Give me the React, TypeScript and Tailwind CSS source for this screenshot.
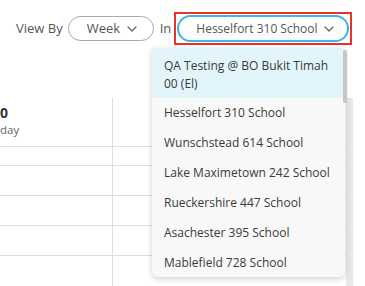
const schools = [
  "Hesselfort 310 School",
  "Wunschstead 614 School",
  "Lake Maximetown 242 School",
  "Rueckershire 447 School",
  "Asachester 395 School",
  "Mablefield 728 School",
];

const Chevron = () => (
  <svg width="10" height="6" viewBox="0 0 10 6" fill="none" stroke="#666" strokeWidth="1.3" strokeLinecap="round" strokeLinejoin="round">
    <path d="M1 1l4 4 4-4" />
  </svg>
);

export default function App() {
  return (
    <div className="relative w-[365px] h-[286px] overflow-hidden bg-white text-[#555] font-['Open_Sans',sans-serif]">
      {/* toolbar */}
      <div className="flex items-center pl-4 pt-3 h-[45px]">
        <span className="text-[13px]">View By</span>
        <button className="ml-[5px] flex items-center justify-between w-[86px] h-[25px] pl-[18px] pr-[16px] rounded-full border border-[#aaa] text-[13px] font-medium">
          Week
          <Chevron />
        </button>
        <span className="ml-[6px] text-[13px]">In</span>
        <div className="ml-[3px] border-2 border-[#e8322b] p-px">
          <button className="flex items-center justify-between w-[172px] h-[27px] pl-[17px] pr-[13px] rounded-full border-2 border-[#3cb6e3] text-[12px] font-medium text-[#555] whitespace-nowrap">
            Hesselfort 310 School
            <Chevron />
          </button>
        </div>
      </div>

      {/* table behind */}
      <div className="mt-[53px] flex">
        <div className="w-[113px] border-r border-[#ddd]">
          <div className="h-[49px] border-b border-[#ddd] pt-[6px]">
            <div className="text-[14px] font-bold text-[#333] leading-[18px]">0</div>
            <div className="text-[11.5px] text-[#666] leading-[16px]">day</div>
          </div>
          <div className="h-[19px] border-b border-[#ddd]" />
          <div className="h-[30px] border-b border-[#ddd]" />
          <div className="h-[30px] border-b border-[#ddd]" />
          <div className="h-[30px] border-b border-[#ddd]" />
          <div className="h-[40px]" />
        </div>
        <div className="w-[233px]">
          <div className="h-[49px] border-b border-[#ddd]" />
          <div className="h-[19px] border-b border-[#ddd]" />
          <div className="h-[30px] border-b border-[#ddd]" />
          <div className="h-[30px] border-b border-[#ddd]" />
          <div className="h-[30px] border-b border-[#ddd]" />
        </div>
        <div className="w-[7px] h-[190px] bg-[#e8e8e8]" />
      </div>

      {/* dropdown menu */}
      <div className="absolute left-[152px] top-[48px] w-[193px] h-[229px] bg-[#f8f8f8] rounded-b-md shadow-[0_2px_6px_rgba(0,0,0,0.18)] text-[12px] text-[#3a3a3a] leading-[18px] whitespace-nowrap">
        <div className="bg-[#e1f5fb] pl-3 pt-[9px] pb-[5px]">
          QA Testing @ BO Bukit Timah
          <br />
          00 (El)
        </div>
        {schools.map((s) => (
          <div key={s} className="pl-3 py-[6px]">{s}</div>
        ))}
        <div className="absolute right-[-2px] top-[2px] w-[4px] h-[53px] rounded bg-[#c6c6c6]" />
      </div>
    </div>
  );
}
